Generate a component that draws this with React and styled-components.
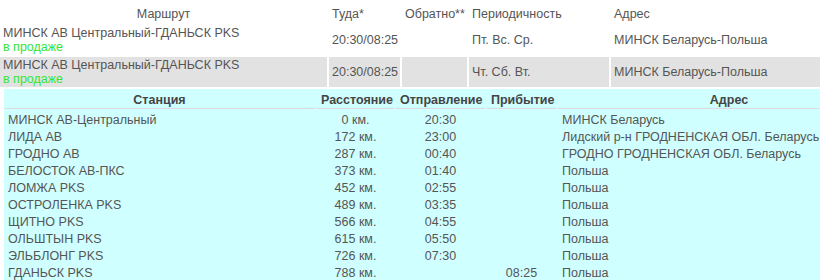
import React from 'react';
import styled, { createGlobalStyle } from 'styled-components';

const GlobalStyle = createGlobalStyle`
    html, body {
        margin: 0;
        padding: 0;
        background: #ffffff;
        overflow: hidden;
    }
    body {
        font-family: "Liberation Sans", Arial, sans-serif;
        font-size: 12.5px;
        color: #555555;
    }
`;

const RouteTable = styled.div`
    display: grid;
    grid-template-columns: 327px 71px 65px 140px 1fr;
    column-gap: 2px;
    row-gap: 2px;
    width: 100%;
`;

const HeadCell = styled.div`
    padding: 7px 3px 1px;
    line-height: 15px;
    text-align: ${(props) => (props.$center ? 'center' : 'left')};
`;

const Cell = styled.div`
    display: flex;
    flex-direction: column;
    justify-content: center;
    padding: 0 3px;
    line-height: 14.5px;
    min-height: 30px;
    background: ${(props) => (props.$shade ? '#e2e2e2' : 'transparent')};
`;

const OnSale = styled.span`
    color: #33e633;
`;

const DetailRow = styled.div`
    grid-column: 1 / -1;
    padding-left: 4px;
`;

const StopTable = styled.div`
    display: grid;
    grid-template-columns: 311px 77px 89px 69px 342px;
    column-gap: 2px;
    row-gap: 2px;
    width: 898px;
    background: #d0ffff;
`;

const StopHead = styled.div`
    padding: 4px 4px 0;
    margin-bottom: 2px;
    line-height: 15px;
    font-weight: bold;
    color: #454545;
    text-align: center;
    border-bottom: 1px solid #dcdcdc;
`;

const StopCell = styled.div`
    padding: 0 4px;
    line-height: 15px;
    white-space: nowrap;
    text-align: ${(props) => props.$align || 'left'};
`;

const routes = [
    { name: 'МИНСК АВ Центральный-ГДАНЬСК PKS', time: '20:30/08:25', days: 'Пт. Вс. Ср.', address: 'МИНСК Беларусь-Польша' },
    { name: 'МИНСК АВ Центральный-ГДАНЬСК PKS', time: '20:30/08:25', days: 'Чт. Сб. Вт.', address: 'МИНСК Беларусь-Польша' },
];

const stops = [
    { station: 'МИНСК АВ-Центральный', dist: '0 км.', dep: '20:30', arr: '', address: 'МИНСК Беларусь' },
    { station: 'ЛИДА АВ', dist: '172 км.', dep: '23:00', arr: '', address: 'Лидский р-н ГРОДНЕНСКАЯ ОБЛ. Беларусь' },
    { station: 'ГРОДНО АВ', dist: '287 км.', dep: '00:40', arr: '', address: 'ГРОДНО ГРОДНЕНСКАЯ ОБЛ. Беларусь' },
    { station: 'БЕЛОСТОК АВ-ПКС', dist: '373 км.', dep: '01:40', arr: '', address: 'Польша' },
    { station: 'ЛОМЖА PKS', dist: '452 км.', dep: '02:55', arr: '', address: 'Польша' },
    { station: 'ОСТРОЛЕНКА PKS', dist: '489 км.', dep: '03:35', arr: '', address: 'Польша' },
    { station: 'ЩИТНО PKS', dist: '566 км.', dep: '04:55', arr: '', address: 'Польша' },
    { station: 'ОЛЬШТЫН PKS', dist: '615 км.', dep: '05:50', arr: '', address: 'Польша' },
    { station: 'ЭЛЬБЛОНГ PKS', dist: '726 км.', dep: '07:30', arr: '', address: 'Польша' },
    { station: 'ГДАНЬСК PKS', dist: '788 км.', dep: '', arr: '08:25', address: 'Польша' },
];

const App = () => {
    return (
        <>
            <GlobalStyle />
            <RouteTable>
                <HeadCell $center>Маршрут</HeadCell>
                <HeadCell>Туда*</HeadCell>
                <HeadCell>Обратно**</HeadCell>
                <HeadCell>Периодичность</HeadCell>
                <HeadCell>Адрес</HeadCell>

                {routes.map((r, i) => {
                    const shade = i % 2 === 1;
                    return (
                        <React.Fragment key={i}>
                            <Cell $shade={shade}>
                                <span>{r.name}</span>
                                <OnSale>в продаже</OnSale>
                            </Cell>
                            <Cell $shade={shade}>{r.time}</Cell>
                            <Cell $shade={shade}></Cell>
                            <Cell $shade={shade}>{r.days}</Cell>
                            <Cell $shade={shade}>{r.address}</Cell>
                        </React.Fragment>
                    );
                })}

                <DetailRow>
                    <StopTable>
                        <StopHead>Станция</StopHead>
                        <StopHead>Расстояние</StopHead>
                        <StopHead>Отправление</StopHead>
                        <StopHead>Прибытие</StopHead>
                        <StopHead>Адрес</StopHead>
                        {stops.map((s, i) => (
                            <React.Fragment key={i}>
                                <StopCell>{s.station}</StopCell>
                                <StopCell $align="center">{s.dist}</StopCell>
                                <StopCell $align="center">{s.dep}</StopCell>
                                <StopCell $align="center">{s.arr}</StopCell>
                                <StopCell>{s.address}</StopCell>
                            </React.Fragment>
                        ))}
                    </StopTable>
                </DetailRow>
            </RouteTable>
        </>
    );
};

export default App;
